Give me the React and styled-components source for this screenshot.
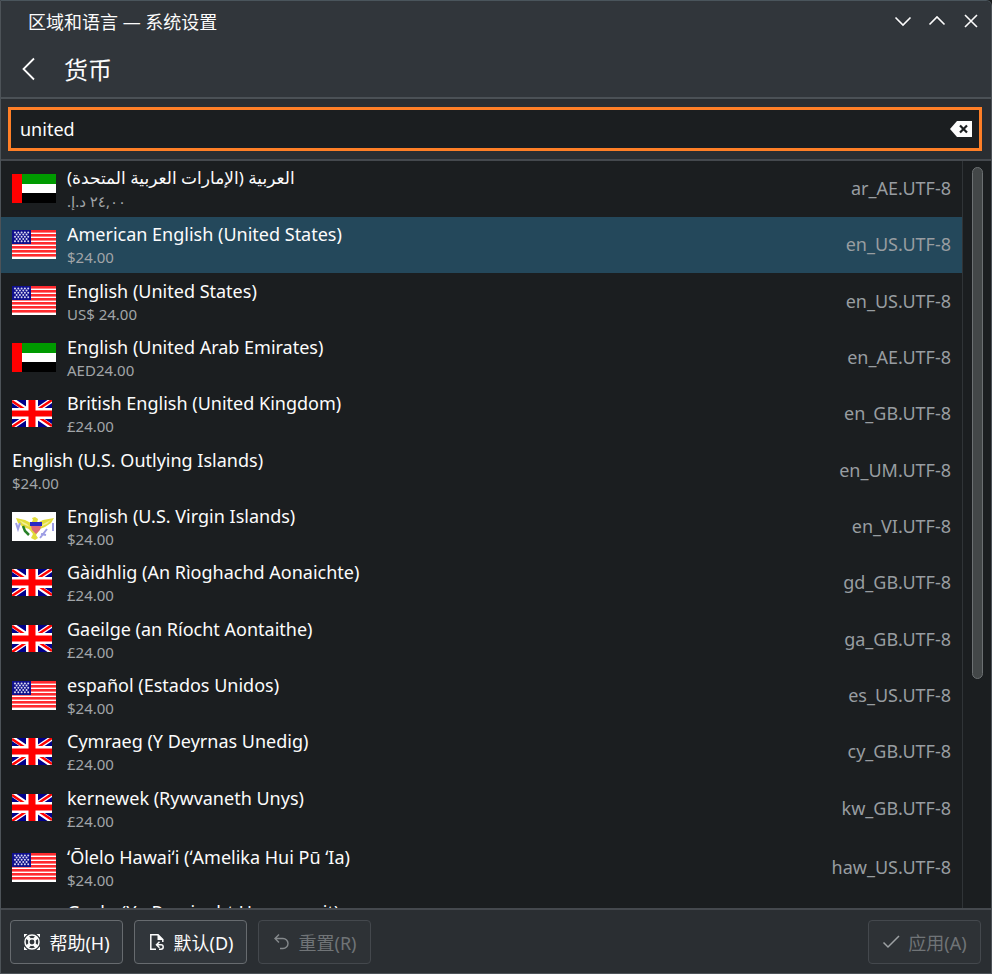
import React, { useState } from "react";
import styled, { createGlobalStyle } from "styled-components";

const GlobalStyle = createGlobalStyle`
  * { box-sizing: border-box; }
  html, body, #root { height: 100%; margin: 0; }
  body {
    background: #1b1e20;
    color: #fcfcfc;
    font-family: "Noto Sans", "Noto Sans CJK SC", "DejaVu Sans", sans-serif;
    font-size: 18px;
  }
  button, input { font: inherit; color: inherit; }
`;

const Window = styled.div`
  display: flex;
  flex-direction: column;
  height: 100vh;
  border: 1px solid #4d5358;
  border-top-color: #4a555c;
  border-radius: 0 6px 0 0;
  background: #2a2e32;
  overflow: hidden;
`;

const TitleBar = styled.header`
  display: flex;
  align-items: center;
  justify-content: space-between;
  flex: none;
  height: 39px;
  padding: 0 11px 0 27px;
  background: #31363b;
`;

const WindowTitle = styled.span`
  font-family: "Noto Sans", "Noto Sans CJK SC", sans-serif;
`;

const WindowControls = styled.div`
  display: flex;
  gap: 16px;
`;

const IconButton = styled.button`
  display: flex;
  padding: 0;
  border: 0;
  background: none;
`;

const PageHeader = styled.div`
  display: flex;
  align-items: center;
  flex: none;
  gap: 27px;
  height: 59px;
  padding: 0 19px;
  background: #31363b;
  border-bottom: 2px solid #4b5156;
`;

const PageTitle = styled.h1`
  margin: 0;
  font-family: "Noto Sans CJK SC", sans-serif;
  font-size: 24px;
  font-weight: 400;
  line-height: 32px;
`;

const SearchArea = styled.div`
  flex: none;
  padding: 8px 9px 8px 7px;
  border-bottom: 2px solid #45494e;
`;

const SearchBox = styled.label`
  display: flex;
  align-items: center;
  height: 44px;
  padding: 0 7px 0 9px;
  border: 3px solid #ff7f27;
  background: #1b1e20;
`;

const SearchInput = styled.input`
  flex: 1;
  min-width: 0;
  padding: 0;
  border: 0;
  outline: 0;
  background: none;
`;

const ListArea = styled.div`
  display: flex;
  flex: 1;
  min-height: 0;
  background: #1b1e20;
`;

const LocaleList = styled.ul`
  display: grid;
  grid-auto-rows: 56px 56px minmax(57px, auto);
  align-content: start;
  flex: 1;
  margin: 0;
  padding: 0;
  list-style: none;
  overflow-y: auto;
  scrollbar-width: none;
`;

const LocaleRow = styled.li`
  display: flex;
  align-items: center;
  gap: 11px;
  height: ${(p) => (p.$tall ? "59px" : "auto")};
  padding: ${(p) => (p.$tall ? "7px 11px 6px" : "4px 11px 6px")};
  margin-top: ${(p) => (p.$afterTall ? "3px" : "0")};
  background: ${(p) => (p.$selected ? "#24485b" : "transparent")};
  cursor: default;
`;

const FlagBox = styled.span`
  display: flex;
  flex: none;
  width: 44px;
`;

const LocaleText = styled.div`
  flex: 1;
  min-width: 0;
`;

const LocaleName = styled.div`
  font-size: ${(p) => (p.$rtl ? "17px" : "18px")};
  line-height: 26px;
  white-space: nowrap;
`;

const Example = styled.div`
  color: #a1a5a8;
  font-size: 15px;
  line-height: 20px;
`;

const LocaleCode = styled.span`
  color: #989da1;
`;

const ScrollTrack = styled.div`
  flex: none;
  width: 29px;
  padding: 6px 8px 10px 9px;
  border-left: 1px solid #303437;
`;

const ScrollThumb = styled.div`
  height: 70%;
  border: 1px solid #6c7072;
  border-radius: 6px;
  background: #434748;
`;

const Footer = styled.footer`
  display: flex;
  flex: none;
  gap: 11px;
  padding: 10px 10px 9px 9px;
  border-top: 2px solid #45494e;
`;

const ActionButton = styled.button`
  display: flex;
  align-items: center;
  justify-content: center;
  gap: 8px;
  height: 44px;
  min-width: 113px;
  padding: 0 10px;
  margin-left: ${(p) => (p.$end ? "auto" : "0")};
  border: 1px solid #676b6f;
  border-radius: 4px;
  background: #31363b;
  font-family: "Noto Sans", "Noto Sans CJK SC", sans-serif;
  white-space: nowrap;
  &:disabled {
    border-color: #44484d;
    background: #2e3236;
    color: #707477;
  }
`;

function Chevron({ d, w = 16, h = 18, width = 1.6 }) {
  return (
    <svg width={w} height={h} viewBox={`0 0 ${w} ${h}`} fill="none" stroke="#fcfcfc" strokeWidth={width}>
      <path d={d} />
    </svg>
  );
}

function UaeFlag() {
  return (
    <svg width="44" height="29" viewBox="0 0 44 29">
      <path fill="#000" d="M10 19h34v10H10z" />
      <path fill="#fff" d="M10 10h34v9H10z" />
      <path fill="#009a00" d="M10 0h34v10H10z" />
      <path fill="#f00" d="M0 0h10v29H0z" />
    </svg>
  );
}

function UsFlag() {
  const stars = [];
  for (let r = 0; r < 5; r++)
    for (let c = 0; c < (r % 2 ? 4 : 5); c++)
      stars.push(<circle key={`${r}-${c}`} cx={3 + c * 3.3 + (r % 2 ? 1.65 : 0)} cy={2.4 + r * 2.2} r="1" />);
  return (
    <svg width="44" height="29" viewBox="0 0 44 29">
      <path fill="#fff" d="M0 0h44v29H0z" />
      {[0, 4, 8, 12, 16, 20, 24].map((y) => (
        <rect key={y} y={y} width="44" height="2.6" fill="#ff2a2e" />
      ))}
      <path fill="#10108c" d="M0 0h19v14H0z" />
      <g fill="#d8d8f0">{stars}</g>
    </svg>
  );
}

function UkFlag() {
  return (
    <svg width="40" height="27" viewBox="0 0 40 27">
      <path fill="#00008b" d="M0 0h40v27H0z" />
      <path stroke="#fff" strokeWidth="5" d="M0 0l40 27M40 0L0 27" />
      <path stroke="#f00" strokeWidth="2.400" d="M0 1l18 12M40 0L22 12M0 27l18-12M40 26L22 14" />
      <path fill="#fff" d="M14 0h12v27H14zM0 8h40v11H0z" />
      <path fill="#f00" d="M16.500 0h7v27h-7zM0 10.500h40v6H0z" />
    </svg>
  );
}

function VirginIslandsFlag() {
  return (
    <svg width="44" height="29" viewBox="0 0 44 29">
      <path fill="#fff" d="M0 0h44v29H0z" />
      <path fill="#e2dc3a" d="M4 6l9 2 6 3 2-3-1-2 3-1 3 2-1 4 6-3 11-2-3 5-6 4-5 2-4 6 2 3-3 2-4-2 2-4-4-5-6-2-5-4z" />
      <path fill="#f2ee96" d="M7 8l8 4 3 3-7-3zM39 8l-8 4-3 3 7-3z" />
      <path fill="#de6b78" d="M19 14h10l-1 4-4 4-4-4z" />
      <path fill="#2929c4" d="M18 10h12v4H18z" />
      <path fill="none" stroke="#278027" strokeWidth="2.5" d="M11 14l2 5 4 4" />
      <path fill="none" stroke="#9d9de4" strokeWidth="2" d="M4 11l2 6 2-6M41 11v8M28 26l7-9M29 22l5 1" />
    </svg>
  );
}

const flags = { ae: UaeFlag, us: UsFlag, gb: UkFlag, vi: VirginIslandsFlag };

const locales = [
  { flag: "ae", name: "العربية (الإمارات العربية المتحدة)", example: "٢٤,٠٠ د.إ.", code: "ar_AE.UTF-8", rtl: true },
  { flag: "us", name: "American English (United States)", example: "$24.00", code: "en_US.UTF-8" },
  { flag: "us", name: "English (United States)", example: "US$ 24.00", code: "en_US.UTF-8" },
  { flag: "ae", name: "English (United Arab Emirates)", example: "AED24.00", code: "en_AE.UTF-8" },
  { flag: "gb", name: "British English (United Kingdom)", example: "£24.00", code: "en_GB.UTF-8" },
  { name: "English (U.S. Outlying Islands)", example: "$24.00", code: "en_UM.UTF-8" },
  { flag: "vi", name: "English (U.S. Virgin Islands)", example: "$24.00", code: "en_VI.UTF-8" },
  { flag: "gb", name: "Gàidhlig (An Rìoghachd Aonaichte)", example: "£24.00", code: "gd_GB.UTF-8" },
  { flag: "gb", name: "Gaeilge (an Ríocht Aontaithe)", example: "£24.00", code: "ga_GB.UTF-8" },
  { flag: "us", name: "español (Estados Unidos)", example: "$24.00", code: "es_US.UTF-8" },
  { flag: "gb", name: "Cymraeg (Y Deyrnas Unedig)", example: "£24.00", code: "cy_GB.UTF-8" },
  { flag: "gb", name: "kernewek (Rywvaneth Unys)", example: "£24.00", code: "kw_GB.UTF-8" },
  { flag: "us", name: "ʻŌlelo Hawaiʻi (ʻAmelika Hui Pū ʻIa)", example: "$24.00", code: "haw_US.UTF-8", tall: true },
  { flag: "gb", name: "Gaelg (Yn Reeriaght Unnaneysit)", example: "£24.00", code: "gv_GB.UTF-8", afterTall: true },
];

function HelpIcon() {
  return (
    <svg width="18" height="18" viewBox="0 0 18 18" fill="none" stroke="#fcfcfc">
      <circle cx="9" cy="9" r="7" strokeWidth="1.5" />
      <circle cx="9" cy="9" r="3.200" strokeWidth="1.5" />
      <path strokeWidth="3.600" d="M4 4l2.600 2.600M14 4l-2.600 2.600M4 14l2.600-2.600M14 14l-2.600-2.600" />
      <path fill="#fcfcfc" stroke="none" d="M1 1h3.500L1 4.500zM17 1v3.500L13.500 1zM17 17h-3.500l3.500-3.500zM1 17v-3.500L4.500 17z" />
    </svg>
  );
}

function DefaultsIcon() {
  return (
    <svg width="18" height="18" viewBox="0 0 18 18" fill="none" stroke="#fcfcfc" strokeWidth="1.5">
      <path d="M8 16.200H2.800V1.800H10L14.800 6.500V9" />
      <path fill="#fcfcfc" stroke="none" d="M9.500 1l6 6h-6z" />
      <path d="M8.500 11.800H13a2.200 2.200 0 0 1 0 4.400h-2M11.500 8.800l-3 3 3 3" />
    </svg>
  );
}

function UndoIcon() {
  return (
    <svg width="18" height="18" viewBox="0 0 18 18" fill="none" stroke="#85898c" strokeWidth="1.4">
      <path d="M6 1.500L2 5.500l4 4M2.500 5.500H10a5 5 0 0 1 0 10H7" />
    </svg>
  );
}

function ApplyIcon() {
  return (
    <svg width="18" height="18" viewBox="0 0 18 18" fill="none" stroke="#9da1a4" strokeWidth="1.5">
      <path d="M1.500 9.500l4.500 4.500L17 3" />
    </svg>
  );
}

function Locale({ item, selected, onSelect }) {
  const Flag = flags[item.flag];
  return (
    <LocaleRow
      role="option"
      aria-selected={selected}
      $selected={selected}
      $tall={item.tall}
      $afterTall={item.afterTall}
      onClick={onSelect}
    >
      {Flag && <FlagBox><Flag /></FlagBox>}
      <LocaleText>
        <LocaleName $rtl={item.rtl}><bdi dir={item.rtl ? "rtl" : "ltr"}>{item.name}</bdi></LocaleName>
        <Example><bdi dir={item.rtl ? "rtl" : "ltr"}>{item.example}</bdi></Example>
      </LocaleText>
      <LocaleCode>{item.code}</LocaleCode>
    </LocaleRow>
  );
}

export default function App() {
  const [query, setQuery] = useState("united");
  const [selected, setSelected] = useState(1);
  return (
    <>
      <GlobalStyle />
      <Window>
        <TitleBar>
          <WindowTitle>区域和语言 — 系统设置</WindowTitle>
          <WindowControls>
            <IconButton aria-label="最小化"><Chevron w={18} d="M1.500 5.500L9 13l7.500-7.500" /></IconButton>
            <IconButton aria-label="最大化"><Chevron w={18} d="M1.500 12.500L9 5l7.500 7.500" /></IconButton>
            <IconButton aria-label="关闭"><Chevron w={18} d="M3 3l12 12M15 3L3 15" /></IconButton>
          </WindowControls>
        </TitleBar>
        <PageHeader>
          <IconButton aria-label="返回"><Chevron w={17} h={24} width={1.8} d="M14 1.500L3.500 12L14 22.500" /></IconButton>
          <PageTitle>货币</PageTitle>
        </PageHeader>
        <SearchArea>
          <SearchBox>
            <SearchInput aria-label="搜索" value={query} onChange={(e) => setQuery(e.target.value)} />
            <IconButton aria-label="清除" onClick={() => setQuery("")}>
              <svg width="22" height="18" viewBox="0 0 22 18">
                <path fill="#fcfcfc" d="M0 9l7-8h15v16H7z" />
                <path stroke="#1b1e20" strokeWidth="2.200" d="M10 5.500l7 7M17 5.500l-7 7" />
              </svg>
            </IconButton>
          </SearchBox>
        </SearchArea>
        <ListArea>
          <LocaleList role="listbox" aria-label="货币">
            {locales.map((item, i) => (
              <Locale key={item.code + item.name} item={item} selected={i === selected} onSelect={() => setSelected(i)} />
            ))}
          </LocaleList>
          <ScrollTrack><ScrollThumb /></ScrollTrack>
        </ListArea>
        <Footer>
          <ActionButton><HelpIcon />帮助(H)</ActionButton>
          <ActionButton><DefaultsIcon />默认(D)</ActionButton>
          <ActionButton disabled><UndoIcon />重置(R)</ActionButton>
          <ActionButton $end disabled><ApplyIcon />应用(A)</ActionButton>
        </Footer>
      </Window>
    </>
  );
}
